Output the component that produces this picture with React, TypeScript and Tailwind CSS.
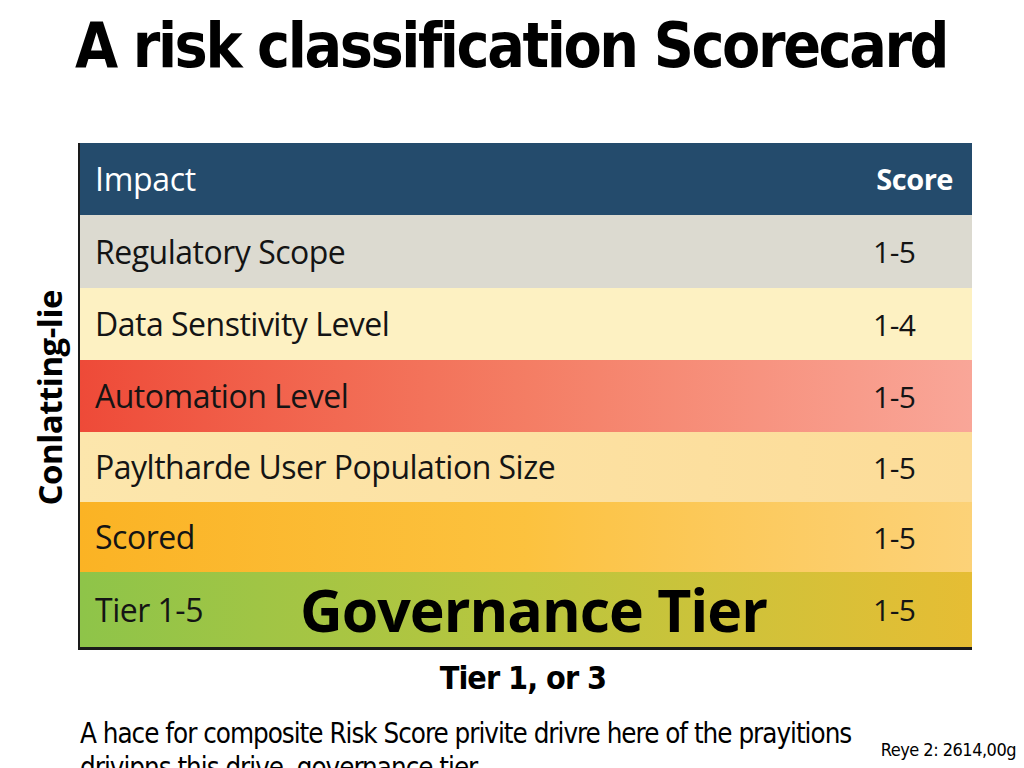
const rows = [
  { label: 'Regulatory Scope', score: '1-5', h: 'h-[73px]', bg: 'bg-[#dcdad0]' },
  { label: 'Data Senstivity Level', score: '1-4', h: 'h-[72px]', bg: 'bg-[#fdf1c2]' },
  { label: 'Automation Level', score: '1-5', h: 'h-[72px]', bg: 'bg-gradient-to-r from-[#ee4a38] via-[#f47d64] to-[#f9a698]' },
  { label: 'Payltharde User Population Size', score: '1-5', h: 'h-[70px]', bg: 'bg-gradient-to-r from-[#fce6ac] to-[#fcdc98]' },
  { label: 'Scored', score: '1-5', h: 'h-[70px]', bg: 'bg-gradient-to-r from-[#fbb324] via-[#fcc23e] to-[#fcd278]' },
];

export default function App() {
  return (
    <div className="relative h-[768px] w-[1024px] overflow-hidden bg-white text-black [font-family:'Open_Sans',sans-serif]">
      <h1 className="pt-[14px] pl-[75px] text-[62px] font-bold leading-[64px] tracking-[-2.4px] [font-family:'DejaVu_Sans_Condensed','Open_Sans',sans-serif]">
        A risk classification Scorecard
      </h1>

      <div className="mt-[65px] flex">
        <div className="flex w-[78px] items-center justify-center pl-[20px] pt-[2px]">
          <span className="rotate-180 text-[33px] font-bold leading-none tracking-[-0.5px] [writing-mode:vertical-rl]">
            Conlatting-lie
          </span>
        </div>

        <div className="w-[894px] border-b-[3px] border-l-[2px] border-[#1a1a1a]">
          <div className="flex h-[72px] items-center justify-between bg-[#244b6c] pl-[15px] pr-[19px] text-white">
            <span className="text-[32px] tracking-[-0.3px]">Impact</span>
            <span className="text-[29px] font-bold tracking-[-0.5px]">Score</span>
          </div>
          {rows.map(r => (
            <div key={r.label} className={`flex items-center ${r.h} ${r.bg} pl-[15px]`}>
              <span className="flex-1 text-[32px] tracking-[-0.5px] text-[#141414]">{r.label}</span>
              <span className="w-[99px] text-[30px] tracking-[-0.5px] text-[#141414]">{r.score}</span>
            </div>
          ))}
          <div className="flex h-[75px] items-center bg-gradient-to-r from-[#8ec449] via-[#b9c63e] to-[#e6bd34] pl-[15px]">
            <span className="w-[205px] text-[32px] tracking-[-0.5px] text-[#141414]">Tier 1-5</span>
            <span className="flex-1 text-[59px] font-bold leading-none tracking-[-1px]">Governance Tier</span>
            <span className="w-[99px] text-[30px] tracking-[-0.5px] text-[#141414]">1-5</span>
          </div>
        </div>
      </div>

      <div className="mt-[8px] pl-[22px] text-center text-[32px] font-bold leading-[40px] tracking-[-1px] [font-family:'DejaVu_Sans_Condensed','Open_Sans',sans-serif]">
        Tier 1, or 3
      </div>

      <div className="mt-[18px] flex items-start">
        <p className="w-[870px] pl-[80px] text-[27.5px] leading-[34px] tracking-[-1px] [font-family:'DejaVu_Sans_Condensed','Open_Sans',sans-serif]">
          A hace for composite Risk Score privite drivre here of the prayitions drivipns this drive, governance tier
        </p>
        <span className="ml-auto mt-[20px] pr-[8px] text-[18px] tracking-[-0.5px] [font-family:'DejaVu_Sans_Condensed','Open_Sans',sans-serif]">
          Reye 2: 2614,00g
        </span>
      </div>
    </div>
  );
}
